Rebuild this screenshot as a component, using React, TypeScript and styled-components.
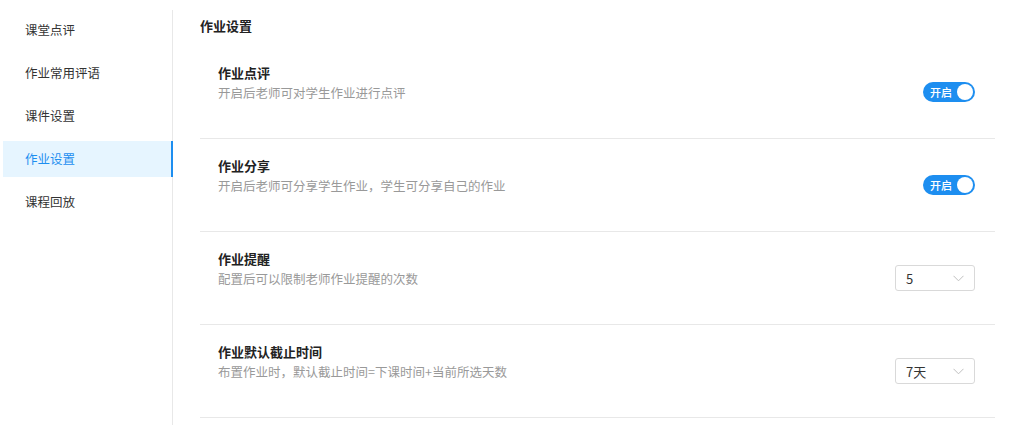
import React from "react";
import styled, { createGlobalStyle } from "styled-components";

const GlobalStyle = createGlobalStyle`
  body {
    margin: 0;
    background: #ffffff;
    font-family: "Noto Sans CJK SC", "Noto Sans", "Liberation Sans", sans-serif;
    font-size: 13px;
    color: #333;
  }
`;

const Page = styled.div`
  display: flex;
  padding-top: 10px;
  height: 415px;
`;

const Sidebar = styled.nav`
  width: 169px;
  padding: 2px 0 0 3px;
  border-right: 1px solid #e8e8e8;
  flex-shrink: 0;
`;

const NavItem = styled.div<{ $active?: boolean }>`
  height: 36px;
  line-height: 36px;
  margin-bottom: 7px;
  padding-left: 22px;
  font-size: 12.5px;
  color: ${(p) => (p.$active ? "#1d8ef0" : "#333")};
  background: ${(p) => (p.$active ? "#e6f5ff" : "transparent")};
  border-right: 2px solid ${(p) => (p.$active ? "#1d8ef0" : "transparent")};
  margin-right: -1px;
`;

const Main = styled.main`
  flex: 1;
  padding: 6px 27px 0 27px;
`;

const Heading = styled.h2`
  margin: 0;
  font-size: 13px;
  font-weight: 700;
  color: #222;
  line-height: 20px;
`;

const RowList = styled.div`
  margin-top: 10px;
`;

const Row = styled.div`
  display: flex;
  align-items: center;
  height: 92px;
  padding: 0 20px 0 18px;
  border-bottom: 1px solid #e8e8e8;
`;

const Text = styled.div`
  flex: 1;
  align-self: flex-start;
  padding-top: 17px;
`;

const Title = styled.div`
  font-size: 13px;
  font-weight: 700;
  color: #222;
  line-height: 20px;
`;

const Desc = styled.div`
  font-size: 12.5px;
  color: #999;
  line-height: 20px;
`;

const Switch = styled.div`
  display: flex;
  align-items: center;
  justify-content: space-between;
  width: 52px;
  height: 20px;
  box-sizing: border-box;
  padding: 0 2px 0 7px;
  border-radius: 10px;
  background: #1d8ef0;
  color: #fff;
  font-size: 11px;
  font-weight: 500;
`;

const Knob = styled.span`
  width: 16px;
  height: 16px;
  border-radius: 50%;
  background: #fff;
`;

const Select = styled.div`
  display: flex;
  align-items: center;
  justify-content: space-between;
  width: 80px;
  height: 26px;
  box-sizing: border-box;
  padding: 0 10px;
  border: 1px solid #d9d9d9;
  border-radius: 3px;
  font-size: 13px;
  color: #333;
  background: #fff;
`;

const Chevron = () => (
  <svg width="11" height="7" viewBox="0 0 11 7" fill="none">
    <path d="M0.5 0.8L5.5 5.8L10.5 0.8" stroke="#bfbfbf" strokeWidth="1" />
  </svg>
);

const navItems = ["课堂点评", "作业常用评语", "课件设置", "作业设置", "课程回放"];

type Setting = {
  title: string;
  desc: string;
  control: "switch" | "select";
  value?: string;
};

const settings: Setting[] = [
  { title: "作业点评", desc: "开启后老师可对学生作业进行点评", control: "switch" },
  { title: "作业分享", desc: "开启后老师可分享学生作业，学生可分享自己的作业", control: "switch" },
  { title: "作业提醒", desc: "配置后可以限制老师作业提醒的次数", control: "select", value: "5" },
  { title: "作业默认截止时间", desc: "布置作业时，默认截止时间=下课时间+当前所选天数", control: "select", value: "7天" },
];

export default function App() {
  return (
    <>
      <GlobalStyle />
      <Page>
        <Sidebar>
          {navItems.map((item) => (
            <NavItem key={item} $active={item === "作业设置"}>
              {item}
            </NavItem>
          ))}
        </Sidebar>
        <Main>
          <Heading>作业设置</Heading>
          <RowList>
            {settings.map((s) => (
              <Row key={s.title}>
                <Text>
                  <Title>{s.title}</Title>
                  <Desc>{s.desc}</Desc>
                </Text>
                {s.control === "switch" ? (
                  <Switch>
                    开启
                    <Knob />
                  </Switch>
                ) : (
                  <Select>
                    {s.value}
                    <Chevron />
                  </Select>
                )}
              </Row>
            ))}
          </RowList>
        </Main>
      </Page>
    </>
  );
}
